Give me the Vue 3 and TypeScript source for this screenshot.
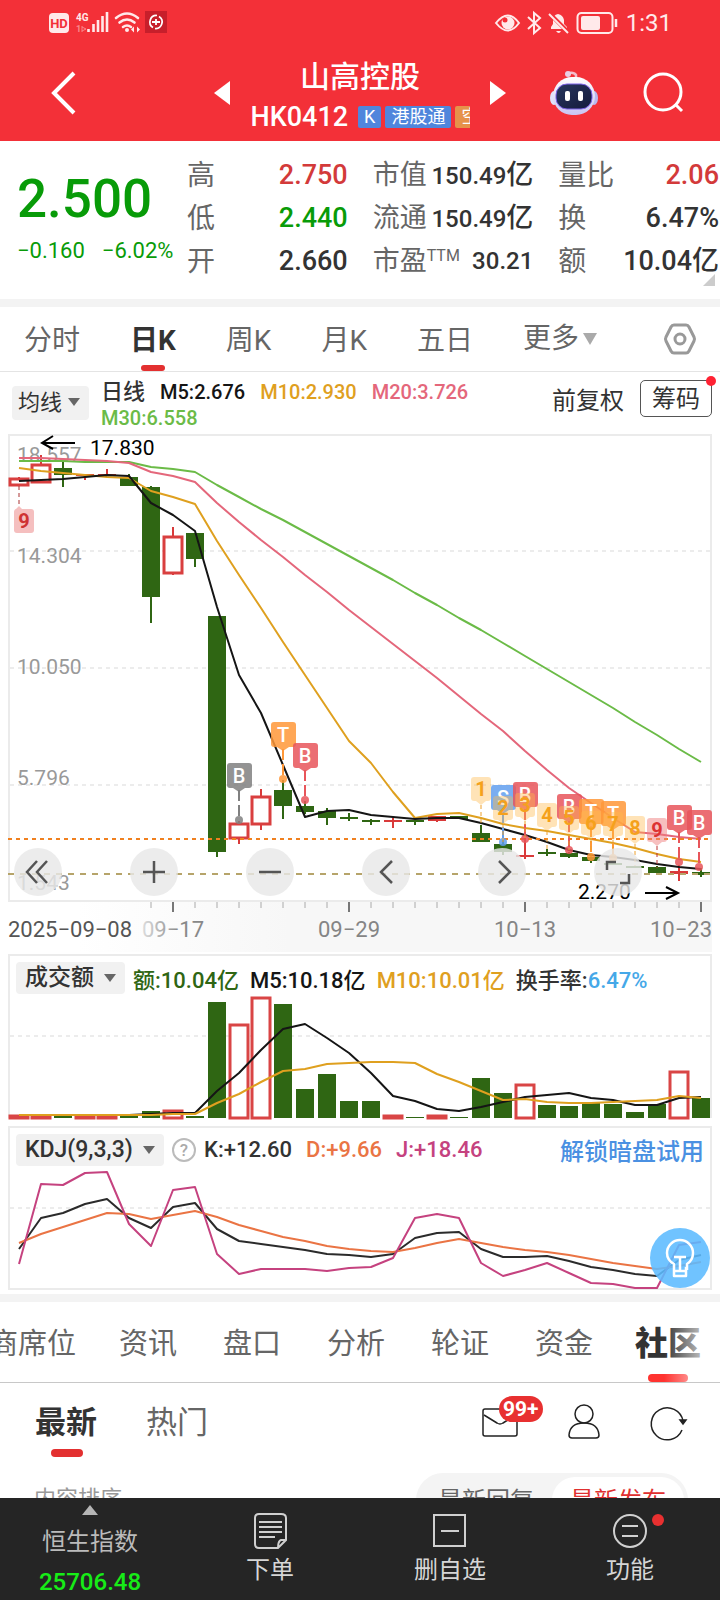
<script setup lang="ts">
import { ref } from 'vue'

interface Candle {
  up?: boolean
  open: number
  close: number
  high: number
  low: number
}

interface Flag {
  x: number
  y: number
  text: string
  kind: 'red' | 'orange' | 'grey' | 'blue'
  dot: number
}

interface Count {
  x: number
  y: number
  text: string
  end: number
  hot?: boolean
}

const step = 22
const xAt = (i: number): number => 19 + step * i
const line = (ys: number[]): string => ys.map((y, i) => `${xAt(i)},${y}`).join(' ')

const c = (open: number, close: number, high: number, low: number, up = false): Candle => ({ open, close, high, low, up })
const candles: Candle[] = [
  c(479, 485, 477, 486, true), c(465, 482, 455, 483, true), c(468, 475, 462, 487), c(474, 476, 474, 480, true),
  c(474, 476, 469, 476, true), c(477, 486, 474, 486), c(487, 597, 486, 623), c(537, 573, 527, 575, true),
  c(533, 559, 533, 567), c(616, 852, 616, 857), c(824, 838, 821, 844, true), c(797, 824, 789, 830, true),
  c(790, 806, 780, 819), c(806, 812, 801, 814), c(811, 818, 808, 825), c(817, 819, 813, 821),
  c(820, 822, 819, 825), c(820, 822, 818, 828, true), c(820, 822, 820, 825), c(816, 821, 816, 822, true),
  c(816, 819, 816, 819), c(833, 842, 825, 842), c(844, 852, 840, 855), c(855, 857, 838, 859, true),
  c(852, 854, 849, 856), c(853, 857, 852, 858), c(857, 861, 856, 863), c(863, 865, 863, 865),
  c(866, 868, 866, 868), c(867, 873, 866, 875), c(871, 874, 865, 881, true), c(872, 875, 868, 877),
]

const ma5 = line([481, 480, 479, 477, 475, 476, 503, 515, 531, 607, 675, 713, 765, 817, 811, 810, 815, 817, 819, 818, 818, 823, 829, 835, 842, 850, 855, 857, 860, 864, 867, 869])
const ma10 = line([468, 471, 473, 475, 477, 478, 491, 497, 504, 541, 575, 608, 642, 675, 708, 741, 763, 792, 818, 814, 813, 818, 824, 828, 831, 835, 839, 843, 848, 854, 859, 862])
const ma20 = line([458, 458, 459, 460, 461, 463, 472, 476, 482, 503, 522, 540, 557, 575, 592, 610, 627, 644, 661, 678, 696, 714, 731, 751, 770, 788, 803, 818, 832, 834, 837, 839])
const ma30 = line([461, 461, 461, 462, 462, 462, 467, 469, 472, 485, 497, 509, 520, 532, 544, 556, 568, 580, 593, 605, 618, 630, 643, 656, 669, 682, 695, 708, 722, 735, 749, 762])

const flags: Flag[] = [
  { x: 239, y: 763, text: 'B', kind: 'grey', dot: 820 },
  { x: 283, y: 722, text: 'T', kind: 'orange', dot: 779 },
  { x: 305, y: 743, text: 'B', kind: 'red', dot: 800 },
  { x: 503, y: 785, text: 'S', kind: 'blue', dot: 842 },
  { x: 525, y: 782, text: 'B', kind: 'red', dot: 839 },
  { x: 569, y: 794, text: 'B', kind: 'red', dot: 850 },
  { x: 591, y: 799, text: 'T', kind: 'orange', dot: 857 },
  { x: 613, y: 801, text: 'T', kind: 'orange', dot: 858 },
  { x: 679, y: 805, text: 'B', kind: 'red', dot: 862 },
  { x: 699, y: 810, text: 'B', kind: 'red', dot: 867 },
]
const counts: Count[] = [
  { x: 481, y: 777, text: '1', end: 826 },
  { x: 503, y: 796, text: '2', end: 842 },
  { x: 525, y: 793, text: '3', end: 838 },
  { x: 547, y: 803, text: '4', end: 850 },
  { x: 569, y: 806, text: '5', end: 850 },
  { x: 591, y: 811, text: '6', end: 857 },
  { x: 613, y: 812, text: '7', end: 858 },
  { x: 635, y: 816, text: '8', end: 866 },
  { x: 657, y: 818, text: '9', end: 868, hot: true },
]

const volTops = [1116, 1116, 1116, 1116, 1116, 1116, 1111, 1111, 1116, 1002, 1025, 998, 1004, 1089, 1074, 1101, 1101, 1116, 1117, 1116, 1117, 1078, 1093, 1085, 1105, 1106, 1103, 1104, 1112, 1104, 1072, 1098]
const volMa5 = line([1115, 1115, 1115, 1115, 1115, 1115, 1114, 1113, 1113, 1091, 1073, 1050, 1029, 1024, 1038, 1053, 1073, 1096, 1101, 1109, 1111, 1107, 1102, 1097, 1095, 1093, 1098, 1100, 1105, 1105, 1098, 1097])
const volMa10 = line([1115, 1115, 1115, 1115, 1115, 1115, 1115, 1114, 1114, 1103, 1094, 1082, 1071, 1069, 1064, 1063, 1062, 1062, 1063, 1074, 1082, 1091, 1100, 1099, 1102, 1103, 1103, 1102, 1101, 1100, 1096, 1098])

const kLine = line([1249, 1218, 1213, 1204, 1199, 1218, 1228, 1207, 1203, 1229, 1241, 1244, 1247, 1250, 1254, 1255, 1257, 1254, 1238, 1233, 1232, 1249, 1257, 1257, 1256, 1261, 1267, 1270, 1274, 1276, 1260, 1255])
const dLine = line([1243, 1234, 1227, 1220, 1213, 1214, 1219, 1215, 1211, 1217, 1225, 1231, 1237, 1241, 1246, 1249, 1251, 1252, 1248, 1243, 1239, 1243, 1247, 1250, 1252, 1255, 1259, 1263, 1266, 1269, 1266, 1262])
const jLine = line([1264, 1184, 1185, 1173, 1172, 1224, 1246, 1190, 1187, 1254, 1274, 1269, 1269, 1269, 1271, 1268, 1267, 1258, 1218, 1214, 1218, 1263, 1276, 1270, 1263, 1273, 1283, 1284, 1288, 1288, 1245, 1242])

const priceLabels = [
  { y: 462, text: '18.557' }, { y: 563, text: '14.304' }, { y: 674, text: '10.050' },
  { y: 785, text: '5.796' }, { y: 890, text: '1.543' },
]
const ticks = Array.from({ length: 26 }, (_, n) => n + 6)

const periods = ['分时', '日K', '周K', '月K', '五日']
const period = ref('日K')
const sections = ['券商席位', '资讯', '盘口', '分析', '轮证', '资金', '社区']
const section = ref('社区')
const feeds = ['最新', '热门']
const feed = ref('最新')
const sorts = ['最新回复', '最新发布']
const sort = ref('最新发布')
const controls = [
  { name: '最早', d: 'M21 -11 L11 0 L21 11 M31 -11 L21 0 L31 11' },
  { name: '放大', d: 'M11 0 H33 M22 -11 V11' },
  { name: '缩小', d: 'M11 0 H33' },
  { name: '向左', d: 'M28 -11 L17 0 L28 11' },
  { name: '向右', d: 'M19 -11 L30 0 L19 11' },
  { name: '全屏', d: 'M11 -2 V-10 H20 M24 11 H33 V2' },
]
</script>

<template>
  <div class="page">
    <header class="top">
      <div class="status">
        <svg class="status-left" viewBox="48 8 122 28" width="122" height="28" aria-hidden="true">
          <rect x="49" y="13" width="20" height="20" rx="4" fill="#ffe9ea" />
          <text x="59" y="28" text-anchor="middle" font-size="13" font-weight="700" fill="#f33038">HD</text>
          <text x="76" y="21" font-size="10" font-weight="700" fill="#ffe9ea">4G</text>
          <text x="76" y="32" font-size="9" font-weight="700" fill="#f9868b">1</text>
          <path d="M82 26v6M82 27l4 2l-4 2" stroke="#f9868b" stroke-width="1" fill="none" />
          <path d="M88.500 32v-3M93.500 32v-8M98 32v-12M102.500 32v-16M107 32v-20" stroke="#ffe9ea" stroke-width="2.600" />
          <path d="M116 18q11-9 22 0M119.500 22.500q7.500-6 15 0M123 27q4-3 8 0" stroke="#ffe9ea" stroke-width="2.600" fill="none" stroke-linecap="round" />
          <circle cx="127" cy="30" r="2" fill="#ffe9ea" />
          <path d="M131 29.500l3-3v6zM140 29.500l-3-3v6z" fill="#ffe9ea" />
          <rect x="145" y="11" width="22" height="22" fill="#c71f2b" />
          <path d="M153 27.500A6.500 6.500 0 0 1 157 15.500M159 16.500A6.500 6.500 0 0 1 155 28.500" fill="none" stroke="#fff" stroke-width="1.700" />
          <path d="M152 22H160M156 19V25" stroke="#fff" stroke-width="1.800" />
        </svg>
        <div class="status-right">
          <svg viewBox="495 8 125 28" width="125" height="28" aria-hidden="true">
            <path d="M497 23q12-15 23 0q-11 15-23 0z" fill="none" stroke="#ffe9ea" stroke-width="2" />
            <circle cx="509" cy="23" r="6.500" fill="#ffe9ea" />
            <circle cx="506" cy="20" r="2.500" fill="#f33038" />
            <path d="M529 17l12 11l-6 5v-20l6 5l-12 11" fill="none" stroke="#ffe9ea" stroke-width="2" />
            <path d="M552 29v-2l2-3v-4q0-5 5-6q5 1 6 6v4l3 3v2zM557 31h5q-2 4-5 0z" fill="#ffe9ea" />
            <path d="M550 13l20 20" stroke="#f33038" stroke-width="4" />
            <path d="M550 14l19 19" stroke="#ffe9ea" stroke-width="2" />
            <rect x="578.500" y="13" width="35" height="20" rx="4" fill="none" stroke="#ffe9ea" stroke-width="2" />
            <rect x="582" y="16" width="19" height="14" rx="2" fill="#ffe9ea" />
            <path d="M617 19v8" stroke="#ffe9ea" stroke-width="2.500" />
          </svg>
          <span class="clock">1:31</span>
        </div>
      </div>
      <div class="title-bar">
        <div class="side side-left">
          <button class="icon-btn" aria-label="返回">
            <svg viewBox="0 0 26 44" width="26" height="44"><path d="M24 2L4 22L24 42" fill="none" stroke="#fff" stroke-width="4" /></svg>
          </button>
          <button class="icon-btn" aria-label="上一只">
            <svg viewBox="0 0 16 24" width="16" height="24"><path d="M0 12L16 0V24z" fill="#fff" /></svg>
          </button>
        </div>
        <div class="stock">
          <h1>山高控股</h1>
          <div class="code-row">
            <span class="code">HK0412</span>
            <span class="tag">K</span>
            <span class="tag">港股通</span>
            <span class="tag tag-orange">空</span>
          </div>
        </div>
        <div class="side side-right">
          <button class="icon-btn" aria-label="下一只">
            <svg viewBox="0 0 16 24" width="16" height="24"><path d="M16 12L0 0V24z" fill="#fff" /></svg>
          </button>
          <button class="icon-btn" aria-label="助手">
            <svg viewBox="0 0 48 46" width="48" height="46">
              <defs>
                <linearGradient id="shell" x1="0" y1="0" x2="0" y2="1"><stop offset="0" stop-color="#fff" /><stop offset="1" stop-color="#c9c3f2" /></linearGradient>
                <linearGradient id="visor" x1="0" y1="0" x2="1" y2="1"><stop offset="0" stop-color="#26365e" /><stop offset="1" stop-color="#151a3c" /></linearGradient>
              </defs>
              <path d="M26 9V5Q24 2 19 3" fill="none" stroke="#f3bccb" stroke-width="2.500" />
              <circle cx="18" cy="4" r="3" fill="#e9cfe4" />
              <ellipse cx="4" cy="28" rx="4" ry="7" fill="#dfe2fa" />
              <ellipse cx="44" cy="28" rx="4" ry="7" fill="#b9b8ee" />
              <rect x="3" y="7" width="42" height="38" rx="19" fill="url(#shell)" />
              <rect x="6" y="14" width="36" height="25" rx="11" fill="url(#visor)" stroke="#7d62e8" stroke-width="1" />
              <rect x="15" y="21" width="5" height="10" rx="2" fill="#fff" />
              <rect x="28" y="21" width="5" height="10" rx="2" fill="#fff" />
            </svg>
          </button>
          <button class="icon-btn" aria-label="搜索">
            <svg viewBox="0 0 42 42" width="42" height="42"><circle cx="20" cy="20" r="18" fill="none" stroke="#fff" stroke-width="3" /><path d="M32 32L39 39" stroke="#fff" stroke-width="3" /></svg>
          </button>
        </div>
      </div>
    </header>

    <section class="quote">
      <div class="price">
        <strong>2.500</strong>
        <div class="change"><span>−0.160</span><span>−6.02%</span></div>
      </div>
      <dl class="facts">
        <div><dt>高</dt><dd class="red">2.750</dd></div>
        <div><dt>低</dt><dd class="green">2.440</dd></div>
        <div><dt>开</dt><dd>2.660</dd></div>
      </dl>
      <dl class="facts tight">
        <div><dt>市值</dt><dd>150.49<span class="unit">亿</span></dd></div>
        <div><dt>流通</dt><dd>150.49<span class="unit">亿</span></dd></div>
        <div><dt>市盈<sup>TTM</sup></dt><dd>30.21</dd></div>
      </dl>
      <dl class="facts">
        <div><dt>量比</dt><dd class="red">2.06</dd></div>
        <div><dt>换</dt><dd>6.47%</dd></div>
        <div><dt>额</dt><dd>10.04<span class="unit">亿</span></dd></div>
      </dl>
      <i class="corner"></i>
    </section>

    <nav class="periods">
      <button v-for="p in periods" :key="p" :class="{ on: p === period }" @click="period = p">{{ p }}</button>
      <button class="more">更多<i class="caret"></i></button>
      <button class="gear" aria-label="设置">
        <svg viewBox="0 0 32 32" width="32" height="32"><path d="M10 2H22Q24 2 25 4L30 14Q31 16 30 18L25 28Q24 30 22 30H10Q8 30 7 28L2 18Q1 16 2 14L7 4Q8 2 10 2z" fill="none" stroke="#999" stroke-width="3" /><circle cx="16" cy="16" r="5" fill="none" stroke="#999" stroke-width="3" /></svg>
      </button>
    </nav>

    <div class="averages">
      <label class="picker small"><select aria-label="指标"><option>均线</option></select></label>
      <p class="ma">
        <span class="cjk">日线</span><span class="black">M5:2.676</span><span class="gold">M10:2.930</span><span class="pink">M20:3.726</span><span class="lime">M30:6.558</span>
      </p>
      <button class="adjust">前复权</button>
      <button class="chips">筹码<i></i></button>
    </div>

    <div class="panel main-panel">
      <svg viewBox="10 436 700 464" role="img" aria-label="日K线图">
        <g stroke="#e6e6e6" stroke-width="1.500" stroke-dasharray="4 4"><path d="M10 551H710M10 668H710M10 785H710" /></g>
        <g v-for="(k, i) in candles" :key="i">
          <path :d="`M${xAt(i)} ${k.high}V${k.low}`" :stroke="k.up ? '#d93a3a' : '#2f6613'" stroke-width="2" />
          <rect v-if="k.up && k.close - k.open > 5" :x="xAt(i) - 9" :y="k.open" width="18" :height="k.close - k.open" fill="#fff" stroke="#d93f3f" stroke-width="3" />
          <rect v-else :x="xAt(i) - 9" :y="k.open" width="18" :height="k.close - k.open" :fill="k.up ? '#d93a3a' : '#2f6613'" />
        </g>
        <g class="digits" font-size="21" fill="#999"><text v-for="l in priceLabels" :key="l.y" x="17" :y="l.y">{{ l.text }}</text></g>
        <g class="lines">
          <polyline :points="ma30" stroke="#6bbb47" /><polyline :points="ma20" stroke="#e4677b" />
          <polyline :points="ma10" stroke="#dfa01f" /><polyline :points="ma5" stroke="#151515" />
        </g>
        <path d="M8 839H710" stroke="#f0801f" stroke-width="2" stroke-dasharray="4 4" />
        <path d="M8 874H710" stroke="#b6a46a" stroke-width="2" stroke-dasharray="6 6" />
        <g fill="none" stroke="#000" stroke-width="2"><path d="M75 443H42M53 436L42 443L53 449M645 893H678M666 887L678 893L666 899" /></g>
        <g class="digits" font-size="21" fill="#000"><text x="90" y="455">17.830</text><text x="578" y="899">2.270</text></g>
        <path d="M19 486V508" stroke="#a33" stroke-dasharray="4 3" />
        <path d="M15 510L19 506L23 510z" fill="#f5bfbf" />
        <rect x="14" y="509" width="20" height="24" rx="3" fill="#f5bfbf" />
        <text class="digits bold" x="24" y="528" text-anchor="middle" font-size="20" fill="#cf3333">9</text>
        <g v-for="f in flags" :key="'f' + f.x" :class="['flag', f.kind]">
          <path class="stem" :d="`M${f.x} ${f.y + 27}V${f.dot}`" />
          <circle :cx="f.x" :cy="f.dot" r="4" />
          <path class="tip" :d="`M${f.x - 6} ${f.y + 25}h12l-6 4z`" />
          <rect :x="f.x - 12" :y="f.y" width="25" height="25" rx="3" />
          <text :x="f.x" :y="f.y + 20" text-anchor="middle">{{ f.text }}</text>
        </g>
        <g v-for="n in counts" :key="'n' + n.x" :class="['count', { hot: n.hot }]">
          <path class="stem" :d="`M${n.x} ${n.y + 28}V${n.end}`" />
          <path class="tip" :d="`M${n.x - 5} ${n.y + 24}h10l-5 4z`" />
          <rect :x="n.x - 10" :y="n.y" width="20" height="24" rx="3" />
          <text class="digits bold" :x="n.x" :y="n.y + 19" text-anchor="middle">{{ n.text }}</text>
        </g>
      </svg>
      <div class="controls">
        <button v-for="b in controls" :key="b.name" :aria-label="b.name">
          <svg viewBox="0 -22 44 44" width="44" height="44"><path :d="b.d" fill="none" stroke="#555" stroke-width="2.500" /></svg>
        </button>
      </div>
    </div>
    <div class="axis">
      <svg viewBox="0 902 720 50" aria-hidden="true">
        <defs>
          <linearGradient id="fade" x1="0" x2="1"><stop offset="0" stop-color="#ddd" /><stop offset="0.600" stop-color="#888" /></linearGradient>
          <linearGradient id="floor" x1="0" x2="1"><stop offset="0.100" stop-color="#fff" /><stop offset="0.400" stop-color="#f7f7f7" /></linearGradient>
        </defs>
        <rect x="8" y="902" width="704" height="50" fill="url(#floor)" />
        <path v-for="t in ticks" :key="t" :d="`M${xAt(t)} 902V${t % 8 === 7 ? 912 : 908}`" :stroke="t % 8 === 7 ? '#777' : '#aaa'" :stroke-width="t % 8 === 7 ? 2 : 1" />
        <g class="digits" font-size="22" fill="#858585">
          <text x="8" y="937" fill="#555">2025−09−08</text>
          <text x="173" y="937" text-anchor="middle" fill="url(#fade)">09−17</text>
          <text x="349" y="937" text-anchor="middle">09−29</text>
          <text x="525" y="937" text-anchor="middle">10−13</text>
          <text x="712" y="937" text-anchor="end">10−23</text>
        </g>
      </svg>
    </div>

    <div class="panel volume">
      <div class="panel-head">
        <label class="picker"><select aria-label="副图一"><option>成交额</option></select></label>
        <span class="forest">额:10.04亿</span><span class="black">M5:10.18亿</span><span class="gold">M10:10.01亿</span>
        <span>换手率:<b class="sky">6.47%</b></span>
      </div>
      <svg viewBox="10 996 700 122" role="img" aria-label="成交额">
        <path d="M10 1036H710" stroke="#e6e6e6" stroke-width="1.500" stroke-dasharray="4 4" />
        <g v-for="(t, i) in volTops" :key="i">
          <rect v-if="candles[i].up" :x="xAt(i) - 9" :y="t" width="18" :height="1118 - t" fill="#fff" stroke="#d94545" stroke-width="3" />
          <rect v-else :x="xAt(i) - 9" :y="t" width="18" :height="1118 - t" fill="#2f6613" />
        </g>
        <g class="lines"><polyline :points="volMa5" stroke="#151515" /><polyline :points="volMa10" stroke="#dfa01f" /></g>
      </svg>
    </div>

    <div class="panel kdj">
      <div class="panel-head">
        <label class="picker"><select aria-label="副图二"><option>KDJ(9,3,3)</option></select></label>
        <button class="help" aria-label="说明">?</button>
        <span>K:+12.60</span><span class="coral">D:+9.66</span><span class="magenta">J:+18.46</span>
        <a class="unlock" href="#trial">解锁暗盘试用</a>
      </div>
      <svg viewBox="10 1168 700 120" role="img" aria-label="KDJ">
        <path d="M10 1208H710" stroke="#e6e6e6" stroke-width="1.500" stroke-dasharray="4 4" />
        <g class="lines"><polyline :points="kLine" stroke="#2b2b2b" /><polyline :points="dLine" stroke="#ea7444" /><polyline :points="jLine" stroke="#c5427f" /></g>
      </svg>
      <button class="bulb" aria-label="提示">
        <svg viewBox="0 0 60 60" width="60" height="60">
          <path d="M24 42V36Q17 32 17 25A13 13 0 0 1 43 25Q43 32 37 36V42M24 39V48H36V39M24 43H36M24 29H36M30 29V42" fill="none" stroke="#fff" stroke-width="2.500" stroke-linejoin="round" />
        </svg>
      </button>
    </div>

    <nav class="sections">
      <button v-for="s in sections" :key="s" :class="{ on: s === section }" @click="section = s">{{ s }}</button>
    </nav>

    <div class="feed">
      <button v-for="f in feeds" :key="f" :class="['feed-tab', { on: f === feed }]" @click="feed = f">{{ f }}</button>
      <div class="feed-tools">
        <button aria-label="消息" class="mail">
          <svg viewBox="0 0 36 36" width="36" height="36"><rect x="1" y="5" width="34" height="27" rx="2" /><path d="M2 11L15 19Q18 21 21 19L34 11" /></svg>
          <em>99+</em>
        </button>
        <button aria-label="我的"><svg viewBox="0 0 36 36" width="36" height="36"><circle cx="18" cy="10" r="9" /><path d="M3 31Q4 19 18 19Q32 19 33 31Q33 34 30 34H6Q3 34 3 31z" /></svg></button>
        <button aria-label="刷新"><svg viewBox="0 0 36 36" width="36" height="36"><path d="M32 26A16 16 0 1 1 33 17" /><path d="M30 16H36L33 20z" fill="#222" /></svg></button>
      </div>
    </div>
    <div class="sort">
      <span>内容排序</span>
      <div class="pill">
        <button v-for="s in sorts" :key="s" :class="{ on: s === sort }" @click="sort = s">{{ s }}</button>
      </div>
    </div>

    <footer class="dock">
      <a class="index" href="#hsi"><i class="up"></i><span>恒生指数</span><b>25706.48</b></a>
      <button>
        <svg viewBox="0 0 36 38" width="36" height="38"><path d="M7 2H29Q34 2 34 6V28L26 36H7Q3 36 3 32V6Q3 2 7 2zM34 28H29Q26 29 26 36M7 10H30M7 15H30M7 20H30M7 25H23" /></svg>
        <span>下单</span>
      </button>
      <button>
        <svg viewBox="0 0 36 38" width="36" height="38"><path d="M2 3H33V34H2zM9 19H27" /></svg>
        <span>删自选</span>
      </button>
      <button class="tools">
        <svg viewBox="0 0 36 38" width="36" height="38"><circle cx="18" cy="19" r="16" /><path d="M10 14H26M10 24H26" /></svg>
        <span>功能</span><i class="dot"></i>
      </button>
    </footer>
  </div>
</template>

<style>
body { margin: 0; background: #fff; }
</style>

<style scoped>
.page { font-family: Roboto, "Noto Sans CJK SC", sans-serif; color: #333; background: #fff; overflow: hidden; }
button { font: inherit; color: inherit; background: none; border: 0; padding: 0; margin: 0; cursor: pointer; white-space: nowrap; }
svg { display: block; overflow: visible; }
.panel > svg, .axis > svg { width: 100%; height: auto; }
.digits { font-weight: 400; }
.digits.bold { font-weight: 700; }

.top { background: #f33038; color: #fff; height: 141px; }
.status { display: flex; justify-content: space-between; align-items: center; height: 44px; padding: 0 48px 0 48px; }
.status-right { display: flex; align-items: center; gap: 7px; }
.clock { font-size: 24px; line-height: 28px; padding-top: 2px; color: #ffe9ea; }
.title-bar { display: grid; grid-template-columns: 1fr 219px 1fr; height: 97px; }
.side { display: flex; align-items: center; justify-content: space-between; }
.side-left { padding: 0 21px 0 50px; }
.side-right { padding: 0 35px 0 20px; }
.icon-btn { display: block; }
.stock { min-width: 0; display: flex; flex-direction: column; align-items: center; }
.stock h1 { margin: 15px 0 0; font-size: 30px; line-height: 36px; font-weight: 500; }
.code-row { width: 100%; display: flex; align-items: center; gap: 4px; overflow: hidden; height: 44px; }
.code { font-size: 27px; font-weight: 500; margin-right: 6px; }
.tag { flex: none; background: #5086dc; font-size: 18px; line-height: 22px; height: 22px; padding: 0 6px; border-radius: 2px; }
.tag-orange { background: #e6924a; }

.quote { position: relative; display: flex; height: 158px; box-sizing: border-box; padding: 13px 1px 0 17px; }
.price { flex: none; width: 170px; color: #089b08; }
.price strong { display: block; font-size: 53px; line-height: 64px; font-weight: 500; margin-top: 13px; }
.change { display: flex; gap: 17px; font-size: 22px; line-height: 28px; margin-top: 6px; }
.facts { flex: 160; margin: 0; font-size: 28px; }
.facts + .facts { margin-left: 25px; }
.facts div { display: flex; justify-content: space-between; line-height: 43px; height: 43px; white-space: nowrap; }
.facts dt { color: #666; }
.facts dd { margin: 0; font-size: 27px; font-weight: 500; }
.facts.tight dd { font-size: 24px; }
.tight dt, .facts .unit { font-size: 27px; }
.facts dt sup { font-size: 16px; line-height: 16px; vertical-align: 9px; }
.red { color: #d33a3a; }
.green { color: #089b08; }
.corner { position: absolute; right: 5px; bottom: 13px; border-left: 12px solid transparent; border-bottom: 12px solid #ccc; }

.periods { display: flex; align-items: center; gap: 50px; height: 64px; padding: 0 24px; border-top: 8px solid #f3f3f3; border-bottom: 1px solid #e4e4e4; font-size: 28px; color: #666; }
.periods button { position: relative; height: 64px; line-height: 68px; }
.periods .on { font-weight: 700; color: #333; }
.on::after { content: ""; position: absolute; left: 50%; bottom: 0; width: 24px; height: 6px; margin-left: -12px; border-radius: 3px; background: #e33030; }
.more { display: flex; align-items: center; gap: 4px; }
.caret { border: 7px solid transparent; border-top: 12px solid #aaa; border-bottom: 0; }
.periods .gear { margin-left: auto; height: 32px; line-height: 32px; }

.averages { display: flex; align-items: flex-start; height: 62px; padding: 0 8px 0 12px; }
.picker { position: relative; display: block; flex: none; }
.picker select { appearance: none; display: block; border: 0; margin: 0; border-radius: 4px; background: #f1f1f1; color: #333; font: 500 23px/32px Roboto, "Noto Sans CJK SC", sans-serif; height: 32px; padding: 0 31px 0 9px; }
.picker::after { content: ""; position: absolute; right: 9px; top: 12px; border: 6px solid transparent; border-top: 8px solid #666; border-bottom: 0; pointer-events: none; }
.picker.small { margin-top: 14px; }
.picker.small select { font-size: 22px; font-weight: 400; height: 34px; padding: 0 26px 0 6px; }
.ma { flex: 1; display: flex; flex-wrap: wrap; column-gap: 15px; margin: 7px 0 0 12px; font-size: 20px; line-height: 26px; font-weight: 500; }
.cjk { font-size: 22px; }
.black { color: #151515; }
.gold { color: #dfa01f; }
.pink { color: #e4677b; }
.lime { color: #6bbb47; }
.forest { color: #2f6613; }
.sky { color: #45a8e8; font-weight: 500; }
.coral { color: #ea7444; }
.magenta { color: #c5427f; }
.adjust { font-size: 24px; line-height: 36px; margin: 11px 16px 0 0; }
.chips { position: relative; box-sizing: border-box; height: 37px; margin-top: 8px; padding: 0 11px; border: 1px solid #555; border-radius: 5px; font-size: 24px; line-height: 37px; }
.chips i { position: absolute; right: -5px; top: -5px; width: 10px; height: 10px; border-radius: 50%; background: #ff2233; }

.panel { position: relative; margin: 0 8px; border: 2px solid #ebebeb; }
.lines polyline { fill: none; stroke-width: 2; stroke-linejoin: round; }
.controls { position: absolute; left: 4px; right: 68px; bottom: 4px; display: flex; justify-content: space-between; }
.controls button { width: 48px; height: 48px; border-radius: 50%; background: rgba(232, 232, 232, 0.82); display: flex; align-items: center; justify-content: center; }
.flag text { fill: #fff; font-size: 20px; font-weight: 500; }
.flag .stem { stroke: currentColor; stroke-width: 2; stroke-dasharray: 11 4; }
.flag rect, .flag circle, .flag .tip { fill: currentColor; opacity: 0.85; }
.flag.red { color: #e8555a; }
.flag.orange { color: #ff9838; }
.flag.grey { color: #808080; }
.flag.blue { color: #629fee; }
.count rect, .count .tip { fill: #ffb84a; opacity: 0.4; }
.count .stem { stroke: #eda02c; stroke-width: 1; stroke-dasharray: 4 3; }
.count text { fill: #f5a11c; font-size: 20px; }
.count.hot rect, .count.hot .tip { fill: #f08080; opacity: 0.5; }
.count.hot text { fill: #d33; }
.count.hot .stem { stroke: #b33; }

.volume { margin-top: 2px; border-bottom: 0; }
.kdj { margin-top: 8px; }
.panel-head { display: flex; align-items: center; gap: 14px; height: 40px; padding-left: 6px; font-size: 22px; font-weight: 500; white-space: nowrap; }
.panel-head .picker { margin: 6px 0 2px; }
.panel-head > span, .unlock { padding-top: 3px; }
.volume .panel-head { gap: 11px; }
.volume .picker + span { margin-left: -3px; }
.help { width: 24px; height: 24px; box-sizing: border-box; margin: 4px -6px 0; border: 2px solid #bbb; border-radius: 50%; font-size: 17px; line-height: 20px; color: #aaa; }
.unlock { margin-left: auto; margin-right: 6px; color: #4a90e2; text-decoration: none; font-size: 24px; }
.bulb { position: absolute; right: 0; bottom: 0; width: 60px; height: 60px; border-radius: 50%; background: rgba(92, 187, 255, 0.88); }

.sections { position: relative; display: flex; gap: 46px; height: 80px; margin-top: 4px; border-top: 8px solid #f3f3f3; border-bottom: 1px solid #c8c8c8; font-size: 29px; color: #666; overflow: hidden; }
.sections button { position: relative; flex: none; height: 80px; line-height: 84px; }
.sections button:first-child { margin: 0 -3px 0 -40px; }
.sections .on { font-size: 33px; font-weight: 900; color: #333; margin-left: -4px; }
.sections .on::after { width: 40px; height: 8px; margin-left: -20px; border-radius: 4px; background: #ff3330; }
.sections::after { content: ""; position: absolute; right: 0; top: 0; bottom: 0; width: 56px; background: linear-gradient(to right, rgba(255, 255, 255, 0), #fff); pointer-events: none; }

.feed { display: flex; align-items: center; height: 76px; padding: 0 34px 0 35px; }
.feed-tab { position: relative; height: 76px; font-size: 31px; line-height: 80px; margin-right: 49px; color: #666; }
.feed-tab.on { font-weight: 700; color: #333; }
.feed-tab.on::after { width: 32px; height: 8px; margin-left: -15px; bottom: 2px; border-radius: 4px; }
.feed-tools { display: flex; gap: 48px; margin-left: auto; padding-top: 2px; }
.feed-tools button { position: relative; }
.feed-tools svg { fill: none; stroke: #222; stroke-width: 1.500px; }
.mail em { position: absolute; left: 17px; top: -8px; height: 26px; padding: 0 4px; border-radius: 13px; background: #e83030; color: #fff; font-size: 21px; line-height: 26px; font-weight: 700; font-style: normal; }
.sort { display: flex; justify-content: space-between; margin-top: 14px; padding: 0 32px 0 34px; }
.sort > span { font-size: 22px; line-height: 52px; color: #999; }
.pill { display: flex; padding: 4px; border-radius: 27px; background: #f4f4f4; }
.pill button { position: relative; font-size: 24px; height: 46px; line-height: 48px; padding: 0 18px; border-radius: 23px; color: #666; }
.pill .on { background: #fff; color: #e03030; }
.pill .on::after { display: none; }

.dock { position: fixed; left: 0; right: 0; bottom: 0; height: 102px; display: flex; background: #252525; color: #d6d6d6; font-size: 24px; }
.dock > * { position: relative; flex: 1; display: flex; flex-direction: column; align-items: center; text-decoration: none; color: inherit; }
.dock button svg { margin-top: 14px; fill: none; stroke: #d0d0d0; stroke-width: 2; }
.dock button span { line-height: 40px; }
.index span { color: #bbb; line-height: 36px; margin-top: 9px; }
.index b { font-weight: 500; color: #17ec17; line-height: 36px; margin-top: 4px; }
.up { margin-top: 7px; border: 8px solid transparent; border-bottom: 10px solid #b5b5b5; border-top: 0; }
.dot { position: absolute; left: 50%; top: 16px; margin-left: 22px; width: 12px; height: 12px; border-radius: 50%; background: #e83030; }
</style>
